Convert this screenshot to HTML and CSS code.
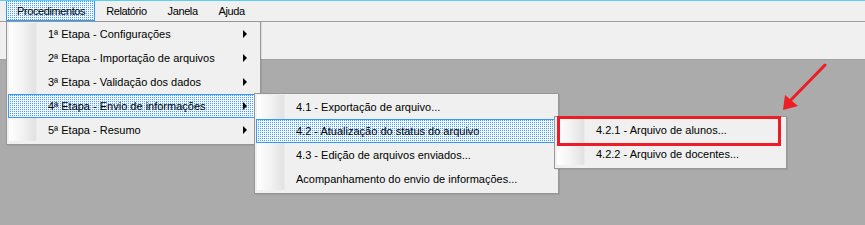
FILE: index.html
```html
<!DOCTYPE html>
<html lang="pt-BR">
<head>
    <meta charset="UTF-8">
    <title>Procedimentos</title>
    <link rel="stylesheet" href="styles.css">
</head>
<body>
    <div class="window">
        <div class="menubar">
            <span class="menubar-item active">Procedimentos</span>
            <span class="menubar-item">Relatório</span>
            <span class="menubar-item">Janela</span>
            <span class="menubar-item">Ajuda</span>
        </div>
        <div class="toolbar"></div>
        <div class="workspace"></div>

        <!-- menu principal -->
        <div class="menu menu-main">
            <div class="item"><span>1ª Etapa - Configurações</span><i class="arrow"></i></div>
            <div class="item"><span>2ª Etapa - Importação de arquivos</span><i class="arrow"></i></div>
            <div class="item"><span>3ª Etapa - Validação dos dados</span><i class="arrow"></i></div>
            <div class="item selected"><span>4ª Etapa - Envio de informações</span><i class="arrow"></i></div>
            <div class="item"><span>5ª Etapa - Resumo</span><i class="arrow"></i></div>
        </div>

        <!-- submenu 4ª etapa -->
        <div class="menu menu-envio">
            <div class="item"><span>4.1 - Exportação de arquivo...</span></div>
            <div class="item selected"><span>4.2 - Atualização do status do arquivo</span></div>
            <div class="item"><span>4.3 - Edição de arquivos enviados...</span></div>
            <div class="item"><span>Acompanhamento do envio de informações...</span></div>
        </div>

        <!-- submenu 4.2 -->
        <div class="menu menu-status">
            <div class="item"><span>4.2.1 - Arquivo de alunos...</span></div>
            <div class="item"><span>4.2.2 - Arquivo de docentes...</span></div>
        </div>

        <div class="highlight-box"></div>
        <svg class="pointer" width="865" height="225" viewBox="0 0 865 225">
            <line x1="825" y1="65" x2="789" y2="102" stroke="#ee1c25" stroke-width="3" stroke-linecap="round"/>
            <polygon points="783,110 785,95 798,106" fill="#ee1c25"/>
        </svg>
    </div>
</body>
</html>
```

FILE: styles.css
```css
body {
    margin: 0;
    background: #ababab;
    font-family: Tahoma, "Liberation Sans", sans-serif;
    font-size: 11px;
    color: #000;
}
.window {
    position: relative;
    width: 865px;
    height: 225px;
    overflow: hidden;
}
.menubar {
    display: flex;
    height: 20px;
    background: #f0f0f0;
    border-top: 1px solid #5ccef0;
    border-bottom: 1px solid #a0a0a0;
    padding-left: 6px;
    letter-spacing: -0.4px;
}
.menubar-item {
    display: flex;
    align-items: center;
    padding: 0 9px 0 10px;
    height: 19px;
    border: 1px solid transparent;
    border-top: 0;
}
.menubar-item.active {
    border: 1px solid #3399ff;
    border-top: 0;
    background-color: #f2f8ff;
    background-image: conic-gradient(#4a9cf2 25%, transparent 0);
    background-size: 2px 2px;
}
.toolbar {
    height: 37px;
    background: #f0f0f0;
    border-bottom: 1px solid #a0a0a0;
}
.workspace {
    height: 160px;
}
.menu {
    position: absolute;
    background: #f0f0f0;
    border: 1px solid #979797;
    padding: 0 2px 2px 1px;
    box-shadow: 1px 1px 0 rgba(0,0,0,0.08);
}
.menu::before {
    content: "";
    position: absolute;
    left: 2px;
    top: 1px;
    bottom: 3px;
    width: 28px;
    background: linear-gradient(to right, #ffffff, #f4f4f4 45%, #e2e2e2 95%, #f0f0f0);
}
.item {
    position: relative;
    display: flex;
    align-items: center;
    height: 24px;
    box-sizing: border-box;
    padding-left: 39px;
    padding-right: 8px;
    border: 1px solid transparent;
    white-space: nowrap;
}
.item span {
    flex: 1;
}
.item.selected {
    border-color: #3399ff;
    background-color: #f2f8ff;
    background-image: conic-gradient(#4a9cf2 25%, transparent 0);
    background-size: 2px 2px;
}
.arrow {
    width: 0;
    height: 0;
    border-top: 4px solid transparent;
    border-bottom: 4px solid transparent;
    border-left: 4px solid #000;
    margin-right: 2px;
}
.menu-main {
    left: 6px;
    top: 21px;
    width: 250px;
}
.menu-envio {
    left: 254px;
    top: 93px;
    width: 300px;
}
.menu-status {
    left: 554px;
    top: 116px;
    width: 228px;
}
.menu-envio .item:first-child,
.menu-status .item:first-child {
    margin-top: 1px;
}
.highlight-box {
    position: absolute;
    left: 557px;
    top: 116px;
    width: 218px;
    height: 24px;
    border: 3px solid #ee1c25;
}
.pointer {
    position: absolute;
    left: 0;
    top: 0;
}
```
